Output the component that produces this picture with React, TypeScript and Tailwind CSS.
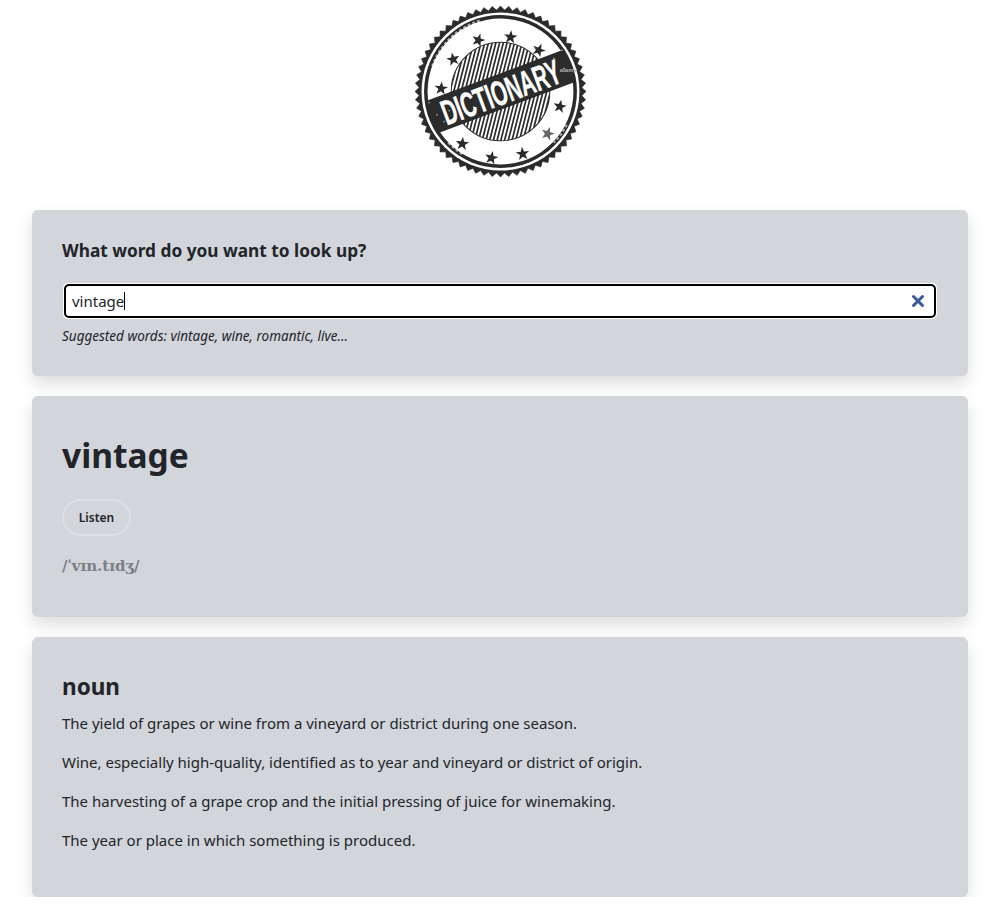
import { X } from "lucide-react"

const defs = [
	"The yield of grapes or wine from a vineyard or district during one season.",
	"Wine, especially high-quality, identified as to year and vineyard or district of origin.",
	"The harvesting of a grape crop and the initial pressing of juice for winemaking.",
	"The year or place in which something is produced.",
]

// star centres, measured in the logo's own 170 box
const stars = [
	[63, 34, 0.3], [95, 31, 0.1], [123, 44, 0.4], [38, 53, -0.2], [26, 82, 0.1],
	[144, 100, 0.2], [132, 127, 0.3], [107, 147, -0.1], [76, 151, 0.2], [47, 137, 0.1],
]

const specks = [
	[14, 96], [22, 108], [19, 88], [34, 104], [29, 115], [40, 110], [138, 52], [148, 62], [128, 72],
	[146, 44],
]

const points = (cx: number, cy: number, outer: number, inner: number, n: number, rot = 0) => {
	const out: string[] = []
	for (let i = 0; i < n * 2; i++) {
		const r = i % 2 === 0 ? outer : inner
		const a = (Math.PI * i) / n + rot
		out.push(`${(cx + r * Math.sin(a)).toFixed(2)},${(cy - r * Math.cos(a)).toFixed(2)}`)
	}
	return out.join(" ")
}

const Logo = () => (
	<svg viewBox="0 0 170 170" className="w-[171px] h-[171px]">
		<defs>
			<clipPath id="disc">
				<circle cx="85" cy="85" r="49" />
			</clipPath>
			<clipPath id="ring">
				<circle cx="85" cy="85" r="74" />
			</clipPath>
		</defs>
		<polygon points={points(85, 85, 85, 81, 64)} fill="#2b2b2b" stroke="#2b2b2b" strokeWidth="0.6" strokeLinejoin="round" />
		<circle cx="85" cy="85" r="78.5" fill="#fff" />
		<circle cx="85" cy="85" r="76" fill="#2b2b2b" />
		<circle cx="85" cy="85" r="72.5" fill="#fff" />
		<g clipPath="url(#disc)" stroke="#2b2b2b" strokeWidth="1.7">
			{Array.from({ length: 36 }, (_, i) => (
				<line key={i} x1={20 + i * 3.7 + 14} y1="30" x2={20 + i * 3.7 - 14} y2="140" />
			))}
		</g>
		<circle cx="85" cy="85" r="49" fill="none" stroke="#2b2b2b" strokeWidth="1" />
		{stars.map(([x, y, rot], i) => (
			<polygon key={i} points={points(x, y, 7, 2.8, 5, rot)} fill={i === 6 ? "#666" : "#2b2b2b"} />
		))}
		<g clipPath="url(#ring)">
			<rect x="0" y="68" width="170" height="34" fill="#2b2b2b" transform="rotate(-20.5 85 85)" />
		</g>
		<text
			x="85"
			y="98"
			transform="rotate(-20.5 85 85)"
			textAnchor="middle"
			textLength="124"
			lengthAdjust="spacingAndGlyphs"
			fontFamily="'Liberation Sans', sans-serif"
			fontWeight="700"
			fontSize="35"
			fill="#fff"
			stroke="#fff"
			strokeWidth="0.4"
		>
			DICTIONARY
		</text>
		{/* worn patches on the ring and banner */}
		<g fill="none" stroke="#fff" strokeOpacity="0.6" strokeWidth="2" strokeDasharray="3 2">
			<path d="M 17 60 A 73 73 0 0 1 66 14" />
			<path d="M 33 136 A 73 73 0 0 0 48 148" />
			<path d="M 151 118 A 73 73 0 0 1 138 136" />
		</g>
		<g fill="#fff" fillOpacity="0.5">
			{specks.map(([x, y]) => (
				<circle key={`${x}-${y}`} cx={x} cy={y} r="0.9" />
			))}
		</g>
		<text x="144" y="66" fontSize="6" fontWeight="700" fill="#b5b5b5" fontFamily="'Liberation Sans', sans-serif">
			alamy
		</text>
	</svg>
)

const App = () => {
	return (
		<div className="w-[936px] ml-8 text-[#212529] font-['Noto_Sans',sans-serif]">
			<div className="flex justify-center pt-[6px] pb-[33px]">
				<Logo />
			</div>
			<div className="flex flex-col gap-5">
				<section className="bg-[#d2d5da] rounded-md shadow-[0_8px_16px_rgba(0,0,0,0.13)] h-[166px] px-[30px] pt-[28px]">
					<h2 className="text-[17.25px] font-bold leading-[26px]">What word do you want to look up?</h2>
					<div className="mt-[19px] mx-[1px] h-[36px] bg-white rounded-[5px] p-px">
						<div className="h-full border-2 border-black rounded-[5px] flex items-center pl-[6px] pr-[7px] text-[15px]">
							<span>vintage</span>
							<span className="w-px h-[18px] bg-black" />
							<X size={18} strokeWidth={4} className="ml-auto text-[#3b5998]" />
						</div>
					</div>
					<p className="mt-[7px] text-[13.5px] italic leading-5">Suggested words: vintage, wine, romantic, live...</p>
				</section>
				<section className="bg-[#d2d5da] rounded-md shadow-[0_8px_16px_rgba(0,0,0,0.13)] h-[221px] px-[30px] pt-[33px]">
					<h1 className="text-[33.5px] font-bold leading-[52px]">vintage</h1>
					<button className="mt-[18px] block w-[69px] h-[37px] border-2 border-[#dcdfe3] rounded-full text-xs font-semibold">
						Listen
					</button>
					<p className="mt-[18px] text-[15px] font-bold text-[#7b8087] leading-6 font-['DejaVu_Serif',serif]">/ˈvɪn.tɪdʒ/</p>
				</section>
				<section className="bg-[#d2d5da] rounded-md shadow-[0_8px_16px_rgba(0,0,0,0.13)] h-[260px] px-[30px] pt-[32px]">
					<h3 className="text-[22.5px] font-bold leading-9">noun</h3>
					<div className="flex flex-col gap-[15px] mt-[6px]">
						{defs.map((d) => (
							<p key={d} className="text-[15px] leading-6">
								{d}
							</p>
						))}
					</div>
				</section>
			</div>
		</div>
	)
}

export default App
